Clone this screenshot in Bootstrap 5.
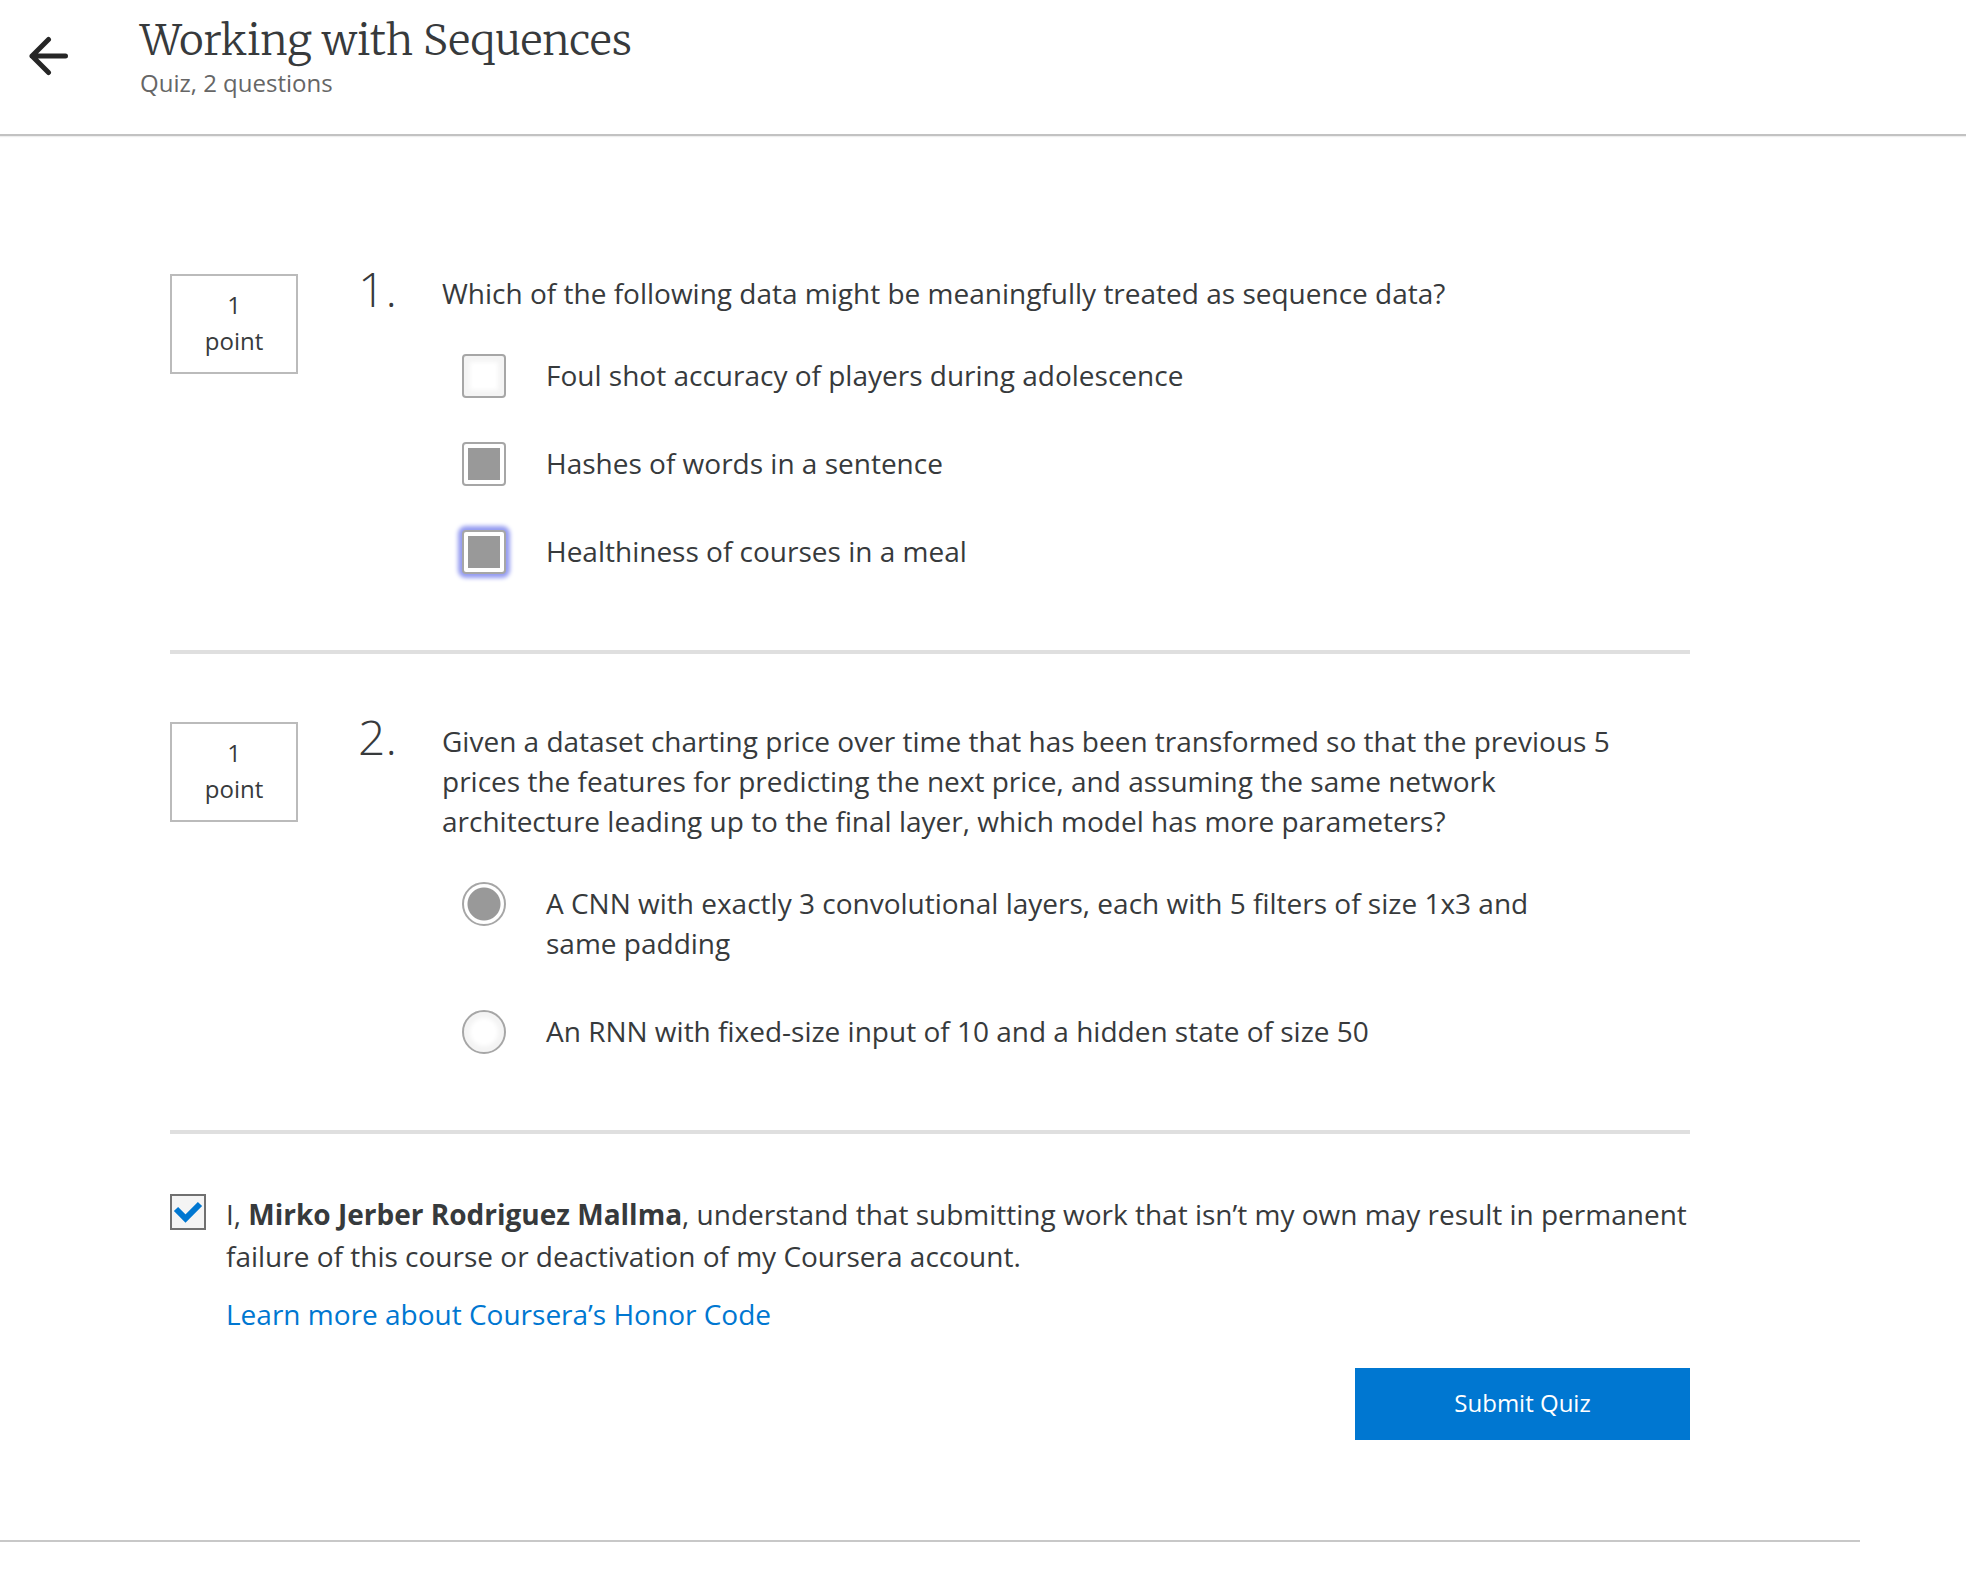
<!DOCTYPE html>
<html lang="en">
<head>
<meta charset="utf-8">
<meta name="viewport" content="width=device-width, initial-scale=1">
<title>Working with Sequences</title>
<link href="https://cdn.jsdelivr.net/npm/bootstrap@5.3.0/dist/css/bootstrap.min.css" rel="stylesheet">
<style>
  body { font-family: "Open Sans", "Noto Sans", sans-serif; font-size: 28px; line-height: 40px; color: #373a3c; }
  .quiz-header { height: 136px; padding: 16px 28px 0; border-bottom: 2px solid #c2c2c2; box-shadow: 0 1px 1px #eee; gap: 70px; }
  .back-link { width: 42px; padding-top: 20px; line-height: 0; }
  .quiz-title { font-family: Merriweather, "Liberation Serif", serif; font-size: 42px; line-height: 49px; font-weight: 300; }
  .quiz-kind { font-size: 24px; line-height: 36px; color: #666; }
  .quiz-main { margin-right: 106px; padding: 138px 24px 100px; border-bottom: 2px solid #c8c8c8; }
  .quiz-form { max-width: 1520px; }
  .question { padding-bottom: 76px; margin-bottom: 68px; border-bottom: 4px solid #dfdfdf; }
  .question.final { margin-bottom: 60px; }
  .points-box { width: 128px; padding: 11px 0 13px; border: 2px solid #bbb; font-size: 24px; line-height: 36px; }
  .question-number { width: 84px; margin-left: 60px; font-size: 48px; line-height: 30px; font-weight: 300; }
  .question-body { padding-right: 60px; margin-top: -1px; }
  .option-list { gap: 44px; margin: 41px 40px 0 20px; }
  .option-row { gap: 40px; }
  .option-text { padding: 1px 0 3px; }
  .option-input { appearance: none; width: 44px; height: 44px; margin: 0; border: 2px solid #a6a6a6; border-radius: 4px; background: #fff; box-shadow: inset 0 0 4px 6px #f4f4f4; outline: 0; }
  .option-input[type=radio] { border-radius: 50%; }
  .option-input:checked { background: #999 content-box; padding: 4px; box-shadow: none; }
  .option-input[type=radio]:checked { background: radial-gradient(circle, #999 16px, #fff 17px); }
  .option-input.focused { background: linear-gradient(#999, #999) content-box, #fff; box-shadow: 0 0 4px 4px #949bf0; }
  .honor { gap: 20px; line-height: 42px; }
  .honor-input { appearance: none; width: 36px; height: 36px; margin: 0; border: 2px solid #707070; background: #f4f4f4; }
  .honor-box { width: 36px; height: 36px; }
  .honor-box svg { display: none; pointer-events: none; }
  .honor-input:checked + svg { display: block; }
  .honor-copy { margin-top: -1px; }
  .honor-link { color: #0077d1; }
  .submit-btn { width: 335px; height: 72px; margin-top: 33px; padding: 4px 12px 6px; background: #0077d1; color: #fff; font-size: 24px; }
  .submit-btn:hover { background: #0067b5; color: #fff; }
</style>
<script src="https://cdn.jsdelivr.net/npm/bootstrap@5.3.0/dist/js/bootstrap.bundle.min.js"></script>
</head>
<body class="bg-white">
<header class="quiz-header d-flex align-items-start">
  <a class="back-link flex-shrink-0" href="#" aria-label="Back">
    <svg width="42" height="40" viewBox="0 0 42 40" fill="none" stroke="#262626" stroke-width="5" stroke-linecap="round" stroke-linejoin="round"><path d="M20.500 3.500 4 20l16.500 16.500M4 20h33.500"/></svg>
  </a>
  <div>
    <h1 class="quiz-title mb-0">Working with Sequences</h1>
    <p class="quiz-kind mb-0">Quiz, 2 questions</p>
  </div>
</header>
<main class="quiz-main">
  <form class="quiz-form mx-auto">
    <section class="question d-flex align-items-start">
      <div class="points-box text-center flex-shrink-0">1<br>point</div>
      <div class="question-number flex-shrink-0">1.</div>
      <div class="question-body flex-grow-1">
        <p class="mb-0">Which of the following data might be meaningfully treated as sequence data?</p>
        <div class="option-list d-flex flex-column">
          <div class="option-row d-flex align-items-start">
            <input class="option-input flex-shrink-0" type="checkbox" id="q1a">
            <label class="option-text" for="q1a">Foul shot accuracy of players during adolescence</label>
          </div>
          <div class="option-row d-flex align-items-start">
            <input class="option-input flex-shrink-0" type="checkbox" id="q1b" checked>
            <label class="option-text" for="q1b">Hashes of words in a sentence</label>
          </div>
          <div class="option-row d-flex align-items-start">
            <input class="option-input focused flex-shrink-0" type="checkbox" id="q1c" checked>
            <label class="option-text" for="q1c">Healthiness of courses in a meal</label>
          </div>
        </div>
      </div>
    </section>
    <section class="question final d-flex align-items-start">
      <div class="points-box text-center flex-shrink-0">1<br>point</div>
      <div class="question-number flex-shrink-0">2.</div>
      <div class="question-body flex-grow-1">
        <p class="mb-0">Given a dataset charting price over time that has been transformed so that the previous 5 prices the features for predicting the next price, and assuming the same network architecture leading up to the final layer, which model has more parameters?</p>
        <div class="option-list d-flex flex-column">
          <div class="option-row d-flex align-items-start">
            <input class="option-input flex-shrink-0" type="radio" name="q2" id="q2a" checked>
            <label class="option-text" for="q2a">A CNN with exactly 3 convolutional layers, each with 5 filters of size 1x3 and same padding</label>
          </div>
          <div class="option-row d-flex align-items-start">
            <input class="option-input flex-shrink-0" type="radio" name="q2" id="q2b">
            <label class="option-text" for="q2b">An RNN with fixed-size input of 10 and a hidden state of size 50</label>
          </div>
        </div>
      </div>
    </section>
    <div class="honor d-flex align-items-start">
      <div class="honor-box position-relative flex-shrink-0">
        <input class="honor-input d-block" type="checkbox" id="honor" checked>
        <svg class="position-absolute top-0 start-0" width="36" height="36" viewBox="0 0 36 36" fill="none" stroke="#0077d1" stroke-width="6"><path d="M6 15l9.500 9.500L30 10"/></svg>
      </div>
      <div class="honor-copy">
        <label class="d-block mb-3" for="honor">I, <strong>Mirko Jerber Rodriguez Mallma</strong>, understand that submitting work that isn’t my own may result in permanent failure of this course or deactivation of my Coursera account.</label>
        <a class="honor-link d-block text-decoration-none" href="#">Learn more about Coursera’s Honor Code</a>
      </div>
    </div>
    <div class="d-flex justify-content-end">
      <button class="submit-btn btn rounded-0 border-0" type="submit">Submit Quiz</button>
    </div>
  </form>
</main>
</body>
</html>
